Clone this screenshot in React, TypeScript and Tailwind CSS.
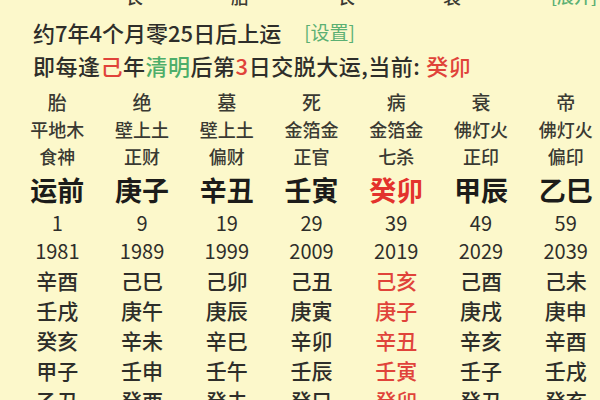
const cols = [
  { ds: '胎', ny: '平地木', ss: '食神', gz: '运前', age: '1', year: '1981', ys: ['辛酉', '壬戌', '癸亥', '甲子', '乙丑'] },
  { ds: '绝', ny: '壁上土', ss: '正财', gz: '庚子', age: '9', year: '1989', ys: ['己巳', '庚午', '辛未', '壬申', '癸酉'] },
  { ds: '墓', ny: '壁上土', ss: '偏财', gz: '辛丑', age: '19', year: '1999', ys: ['己卯', '庚辰', '辛巳', '壬午', '癸未'] },
  { ds: '死', ny: '金箔金', ss: '正官', gz: '壬寅', age: '29', year: '2009', ys: ['己丑', '庚寅', '辛卯', '壬辰', '癸巳'] },
  { ds: '病', ny: '金箔金', ss: '七杀', gz: '癸卯', age: '39', year: '2019', ys: ['己亥', '庚子', '辛丑', '壬寅', '癸卯'], current: true },
  { ds: '衰', ny: '佛灯火', ss: '正印', gz: '甲辰', age: '49', year: '2029', ys: ['己酉', '庚戌', '辛亥', '壬子', '癸丑'] },
  { ds: '帝', ny: '佛灯火', ss: '偏印', gz: '乙巳', age: '59', year: '2039', ys: ['己未', '庚申', '辛酉', '壬戌', '癸亥'] },
]

const font = { fontFamily: '"Noto Sans CJK SC", "Noto Sans", sans-serif' }

export default function App() {
  return (
    <div className="h-[400px] w-[600px] overflow-hidden bg-[#fcf8cb] font-medium text-[#2e2e2a]" style={font}>
      {/* cut-off header row */}
      <div className="h-[7px] overflow-hidden">
        <div className="-mt-[15px] flex items-end pl-[81px] text-[18px] leading-[22px] text-[#3a3a33]">
          <span className="w-[106px] text-center">长</span>
          <span className="w-[106px] text-center">胎</span>
          <span className="w-[106px] text-center">长</span>
          <span className="w-[106px] text-center">衰</span>
          <span className="ml-auto pr-[3px] text-[17px] text-[#5bb073]">[展开]</span>
        </div>
      </div>

      <div className="mt-[12px] flex items-center pl-[33px] text-[22px] leading-[26px]">
        <span>约7年4个月零25日后上运</span>
        <span className="ml-[23px] text-[19px] font-normal text-[#5bb073]">[设置]</span>
      </div>
      <div className="mt-[7px] pl-[33px] text-[22px] leading-[26px] tracking-[0.5px]">
        即每逢<span className="text-[#e0433a]">己</span>年<span className="text-[#4dae6a]">清明</span>后第<span className="text-[#e0433a]">3</span>日交脱大运,当前:
        <span className="ml-[6px] text-[#e0433a]">癸卯</span>
      </div>

      <div className="mt-[10px] grid w-[608px] grid-cols-7 pl-[15px]">
        {cols.map((c) => (
          <div key={c.year} className="flex flex-col items-center">
            <div className="text-[19px] leading-[28px] text-[#3a3a33]">{c.ds}</div>
            <div className="text-[18px] leading-[27px] text-[#3a3a33]">{c.ny}</div>
            <div className="text-[18px] leading-[27px] text-[#3a3a33]">{c.ss}</div>
            <div className={`mt-[3px] text-[27px] font-bold leading-[33px] ${c.current ? 'text-[#e3322c]' : 'text-[#1c1c1a]'}`}>{c.gz}</div>
            <div className="mt-[3px] text-[20px] font-normal leading-[28px]">{c.age}</div>
            <div className="text-[20px] font-normal leading-[28px]">{c.year}</div>
            {c.ys.map((y) => (
              <div key={y} className={`text-[21px] leading-[30px] ${c.current ? 'text-[#e0433a]' : ''}`}>
                {y}
              </div>
            ))}
          </div>
        ))}
      </div>
    </div>
  )
}
